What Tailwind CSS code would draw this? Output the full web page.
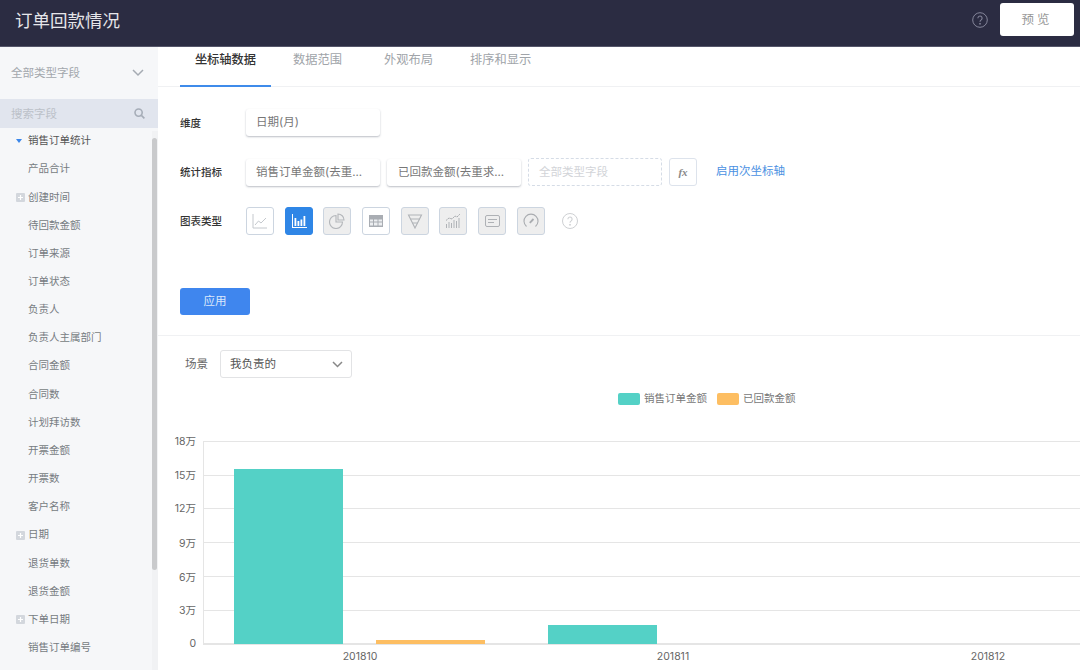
<!DOCTYPE html>
<html lang="zh">
<head>
<meta charset="UTF-8">
<title>订单回款情况</title>
<script src="https://cdn.jsdelivr.net/npm/@tailwindcss/browser@4"></script>
</head>
<body class="w-[1080px] h-[670px] overflow-hidden bg-white font-['Inter','Noto_Sans_CJK_SC',sans-serif] text-[#666]">
<!-- Header -->
<header class="h-[47px] bg-[#2b2c42] border-b border-[#55566a] flex items-center justify-between pl-[15px] pr-[6px]">
  <h1 class="text-[17.5px] text-[#e6e6ea] -mt-1">订单回款情况</h1>
  <div class="flex items-center gap-3 -mt-[7px]">
    <svg class="w-4 h-4" viewBox="0 0 16 16" fill="none" stroke="#85869a"><circle cx="8" cy="8" r="7.3"/><path d="M5.9 6.2a2.1 2.1 0 1 1 3.3 1.7c-.8.5-1.2.9-1.2 1.8" stroke-width="1.1"/><circle cx="8" cy="11.8" r=".5" fill="#85869a"/></svg>
    <button class="w-[74px] h-[33px] pt-[1px] bg-white rounded-[3px] text-[12.5px] text-[#999] tracking-[3px]">预览</button>
  </div>
</header>
<div class="flex h-[623px] overflow-hidden">
  <!-- Sidebar -->
  <aside class="w-[158px] shrink-0 bg-[#f6f7f9] relative overflow-hidden">
    <div class="h-[52px] flex items-center justify-between pl-[11px] pr-[14px]">
      <span class="text-[11.5px] text-[#a3a7ad] pt-[2px]">全部类型字段</span>
      <svg class="w-3 h-2" viewBox="0 0 12 8" fill="none" stroke="#a5abb3" stroke-width="1.5"><path d="M1 1l5 5 5-5"/></svg>
    </div>
    <div class="h-[29px] bg-[#e1e5ee] flex items-center justify-between pl-[11px] pr-[13px]">
      <span class="text-[11.5px] text-[#bcc1c9] pt-[2px]">搜索字段</span>
      <svg class="w-[11px] h-[11px]" viewBox="0 0 11 11" fill="none" stroke="#a6adb8" stroke-width="1.6"><circle cx="4.6" cy="4.6" r="3.6"/><path d="M7.4 7.4l3 3"/></svg>
    </div>
    <ul class="text-[10.5px] text-[#777c82] -mt-[1px]">
      <li class="h-[28.17px] flex items-center pl-[16px] gap-[7px] text-[#555]"><span class="w-0 h-0 border-x-[3px] border-x-transparent border-t-[4px] border-t-[#3b87ea]"></span><span class="ml-[-1px]">销售订单统计</span></li>
      <li class="h-[28.17px] flex items-center pl-[28px]">产品合计</li>
      <li class="h-[28.17px] flex items-center pl-[16px] gap-[3px]"><svg class="w-[9px] h-[9px]" viewBox="0 0 9 9"><rect width="9" height="9" rx="1" fill="#d3d7dd"/><path d="M4.5 2v5M2 4.500h5" stroke="#fff" stroke-width="1.200"/></svg>创建时间</li>
      <li class="h-[28.17px] flex items-center pl-[28px]">待回款金额</li>
      <li class="h-[28.17px] flex items-center pl-[28px]">订单来源</li>
      <li class="h-[28.17px] flex items-center pl-[28px]">订单状态</li>
      <li class="h-[28.17px] flex items-center pl-[28px]">负责人</li>
      <li class="h-[28.17px] flex items-center pl-[28px]">负责人主属部门</li>
      <li class="h-[28.17px] flex items-center pl-[28px]">合同金额</li>
      <li class="h-[28.17px] flex items-center pl-[28px]">合同数</li>
      <li class="h-[28.17px] flex items-center pl-[28px]">计划拜访数</li>
      <li class="h-[28.17px] flex items-center pl-[28px]">开票金额</li>
      <li class="h-[28.17px] flex items-center pl-[28px]">开票数</li>
      <li class="h-[28.17px] flex items-center pl-[28px]">客户名称</li>
      <li class="h-[28.17px] flex items-center pl-[16px] gap-[3px]"><svg class="w-[9px] h-[9px]" viewBox="0 0 9 9"><rect width="9" height="9" rx="1" fill="#d3d7dd"/><path d="M4.5 2v5M2 4.500h5" stroke="#fff" stroke-width="1.200"/></svg>日期</li>
      <li class="h-[28.17px] flex items-center pl-[28px]">退货单数</li>
      <li class="h-[28.17px] flex items-center pl-[28px]">退货金额</li>
      <li class="h-[28.17px] flex items-center pl-[16px] gap-[3px]"><svg class="w-[9px] h-[9px]" viewBox="0 0 9 9"><rect width="9" height="9" rx="1" fill="#d3d7dd"/><path d="M4.5 2v5M2 4.500h5" stroke="#fff" stroke-width="1.200"/></svg>下单日期</li>
      <li class="h-[28.17px] flex items-center pl-[28px]">销售订单编号</li>
    </ul>
    <!-- scrollbar -->
    <div class="absolute right-0 top-[84px] bottom-0 w-[6px] bg-[#f1f2f4]"></div>
    <div class="absolute right-[1px] top-[91px] h-[432px] w-[5px] rounded-full bg-[#c9cacc]"></div>
  </aside>
  <!-- Main -->
  <main class="flex-1 min-w-0">
    <nav class="h-[40px] border-b border-[#f0f1f3] pl-[22px] flex text-[12.25px] text-[#a0a4a9]">
      <a class="w-[91px] h-[40px] border-b-2 border-[#3f8bea] text-center text-[#333] font-medium pt-[4px]">坐标轴数据</a>
      <a class="ml-[22px] pt-[4px]">数据范围</a>
      <a class="ml-[42px] pt-[4px]">外观布局</a>
      <a class="ml-[37px] pt-[4px]">排序和显示</a>
    </nav>
    <section class="h-[249px] border-b border-[#f0f1f3] pl-[22px] pt-[22px]">
      <div class="flex items-center h-[27px]">
        <label class="w-[66px] pt-[2px] text-[10.5px] font-medium text-[#333]">维度</label>
        <div class="w-[134px] h-[27px] flex items-center pl-[10px] pt-[1px] rounded-[3px] bg-white shadow-[0_1px_2px_rgba(60,70,90,0.35)] text-[11.5px] text-[#777]">日期(月)</div>
      </div>
      <div class="flex items-center h-[28px] mt-[22px]">
        <label class="w-[66px] pt-[2px] text-[10.5px] font-medium text-[#333]">统计指标</label>
        <div class="w-[134px] h-[27px] flex items-center pl-[10px] pt-[1px] rounded-[3px] bg-white shadow-[0_1px_2px_rgba(60,70,90,0.35)] text-[11.5px] text-[#777]">销售订单金额(去重...</div>
        <div class="w-[134px] h-[27px] ml-[7px] flex items-center pl-[11px] pt-[1px] rounded-[3px] bg-white shadow-[0_1px_2px_rgba(60,70,90,0.35)] text-[11.5px] text-[#777]">已回款金额(去重求...</div>
        <div class="w-[134px] h-[28px] ml-[7px] flex items-center pl-[10px] pt-[1px] rounded-[3px] border border-dashed border-[#d5dce6] text-[11.5px] text-[#d2d4d8]">全部类型字段</div>
        <div class="w-[28px] h-[28px] ml-[7px] flex items-center justify-center rounded-[3px] border border-[#dde3ec] font-['Liberation_Serif',serif] italic font-bold text-[11px] text-[#888]">fx</div>
        <a class="ml-[19px] text-[11.5px] text-[#4a90e2]">启用次坐标轴</a>
      </div>
      <div class="flex items-center h-[28px] mt-[21px]">
        <label class="w-[66px] pt-[2px] text-[10.5px] font-medium text-[#333]">图表类型</label>
        <div class="flex gap-[10.7px]">
          <!-- line -->
          <div class="w-[28px] h-[28px] rounded-[3px] border border-[#ccd5e0] flex items-center justify-center">
            <svg class="w-4 h-4" viewBox="0 0 16 16" fill="none" stroke="#c4c8cd"><path d="M1 1v14h14"/><path d="M3 12l3.5-4 2.500 2L14 5"/></svg>
          </div>
          <!-- bar, selected -->
          <div class="w-[28px] h-[28px] rounded-[3px] bg-[#2f86e6] border border-[#2f86e6] flex items-center justify-center">
            <svg class="w-4 h-4" viewBox="0 0 16 16" fill="#fff"><path d="M1 1h1v13h14v1H1z"/><rect x="3.500" y="5" width="1.800" height="8"/><rect x="6.500" y="8" width="1.800" height="5"/><rect x="9.500" y="6.500" width="1.800" height="6.500"/><rect x="12.500" y="3" width="1.800" height="10"/></svg>
          </div>
          <!-- pie -->
          <div class="w-[28px] h-[28px] rounded-[3px] bg-[#eeeeee] border border-[#ccd5e0] flex items-center justify-center">
            <svg class="w-4 h-4" viewBox="0 0 16 16" fill="none" stroke="#b4b7bb" stroke-width="1.100"><path d="M7 2.500a6.500 6.500 0 1 0 6.500 6.500H7z"/><path d="M9 1a6 6 0 0 1 6 6H9z"/></svg>
          </div>
          <!-- table -->
          <div class="w-[28px] h-[28px] rounded-[3px] border border-[#ccd5e0] flex items-center justify-center">
            <svg class="w-[14px] h-[12px]" viewBox="0 0 14 12"><rect width="14" height="12" fill="#a9adb3"/><path d="M5 4.500h3.500v2H5zM9.500 4.500H13v2H9.500zM5 7.500h3.500v3H5zM9.500 7.500H13v3H9.500zM1 4.500h3v2H1zM1 7.500h3v3H1z" fill="#eceef0"/></svg>
          </div>
          <!-- funnel -->
          <div class="w-[28px] h-[28px] rounded-[3px] bg-[#eeeeee] border border-[#ccd5e0] flex items-center justify-center">
            <svg class="w-4 h-4" viewBox="0 0 16 16" fill="none" stroke="#b0b3b7" stroke-width="1.100"><path d="M1.500 2h13L8 15z"/><path d="M3.500 6h9M5.500 10h5"/></svg>
          </div>
          <!-- combo -->
          <div class="w-[28px] h-[28px] rounded-[3px] bg-[#eeeeee] border border-[#ccd5e0] flex items-center justify-center">
            <svg class="w-4 h-4" viewBox="0 0 16 16" fill="#b0b3b7"><path d="M1 7.500l3-2.500 3 1 3-3 2 1 3-3" fill="none" stroke="#a9acb0" stroke-dasharray="2 .6"/><path d="M1 11h1v4H1zM3.500 9h1v6h-1zM6 10h1v5H6zM8.500 7h1v8h-1zM11 8h1v7h-1zM13.500 5h1v10h-1z"/></svg>
          </div>
          <!-- text card -->
          <div class="w-[28px] h-[28px] rounded-[3px] bg-[#eeeeee] border border-[#ccd5e0] flex items-center justify-center">
            <svg class="w-[15px] h-[12px]" viewBox="0 0 15 12" fill="none" stroke="#aeb1b5"><rect x=".5" y=".5" width="14" height="11" rx="1.500"/><path d="M3 4.500h9M3 7.500h6"/></svg>
          </div>
          <!-- gauge -->
          <div class="w-[28px] h-[28px] rounded-[3px] bg-[#eeeeee] border border-[#ccd5e0] flex items-center justify-center">
            <svg class="w-4 h-4" viewBox="0 0 16 16" fill="none" stroke="#a9acb0" stroke-width="1.100"><path d="M3.500 13.500a7 7 0 1 1 9 0"/><path d="M6.800 9.800L10.500 6" stroke-width="1.800"/></svg>
          </div>
        </div>
        <svg class="w-4 h-4 ml-[17px]" viewBox="0 0 16 16" fill="none" stroke="#ced0d3"><circle cx="8" cy="8" r="7.500"/><path d="M5.900 6.200a2.100 2.100 0 1 1 3.300 1.700c-.8.5-1.200.9-1.200 1.800" stroke-width="1.100"/><circle cx="8" cy="11.800" r=".5" fill="#ced0d3"/></svg>
      </div>
      <button class="block mt-[53px] w-[70px] h-[27px] pt-[1px] rounded-[3px] bg-[#3f86ee] text-[11.500px] text-[#dbe8fb]">应用</button>
    </section>
    <div class="h-[57px] flex items-start pt-[14px] pl-[27px]">
      <span class="text-[11.500px] text-[#666] h-[28px] leading-[29px] w-[35px]">场景</span>
      <div class="w-[132px] h-[28px] pt-[1px] rounded-[3px] border border-[#e2e3e5] flex items-center justify-between pl-[9px] pr-[8px] text-[11.500px] text-[#555]">
        我负责的
        <svg class="w-[11px] h-[7px]" viewBox="0 0 11 7" fill="none" stroke="#888" stroke-width="1.500"><path d="M1 1l4.500 4.500L10 1"/></svg>
      </div>
    </div>
    <!-- Chart -->
    <div class="relative h-[277px]">
      <div class="flex items-center gap-[10px] h-[14px] text-[10.500px] text-[#777] -mt-[1px] pl-[460px]">
        <span class="flex items-center gap-[4px]"><span class="w-[22px] h-[12px] rounded-[2px] bg-[#54d1c6]"></span>销售订单金额</span>
        <span class="flex items-center gap-[4px]"><span class="w-[22px] h-[12px] rounded-[2px] bg-[#fdbe62]"></span>已回款金额</span>
      </div>
      <svg class="absolute left-0 top-[19px]" width="922" height="259" viewBox="158 411 922 259" font-size="10.500" fill="#666">
        <g stroke="#e5e5e5" shape-rendering="crispEdges">
          <path d="M203 441.500H1080M203 475.500H1080M203 508.500H1080M203 542.500H1080M203 576.500H1080M203 610.500H1080"/>
          <path d="M203.500 441V644" stroke-width="1"/>
          <path d="M203 644H1080" stroke-width="1.500"/>
        </g>
        <g text-anchor="end">
          <text x="196" y="445">18万</text>
          <text x="196" y="479">15万</text>
          <text x="196" y="512">12万</text>
          <text x="196" y="547">9万</text>
          <text x="196" y="581">6万</text>
          <text x="196" y="614">3万</text>
          <text x="196" y="647">0</text>
        </g>
        <rect x="234" y="469" width="109" height="175" fill="#54d1c6"/>
        <rect x="376" y="640" width="109" height="4" fill="#fdbe62"/>
        <rect x="548" y="625" width="109" height="19" fill="#54d1c6"/>
        <g text-anchor="middle">
          <text x="360" y="660">201810</text>
          <text x="673" y="660">201811</text>
          <text x="988" y="660">201812</text>
        </g>
      </svg>
    </div>
  </main>
</div>
</body>
</html>
